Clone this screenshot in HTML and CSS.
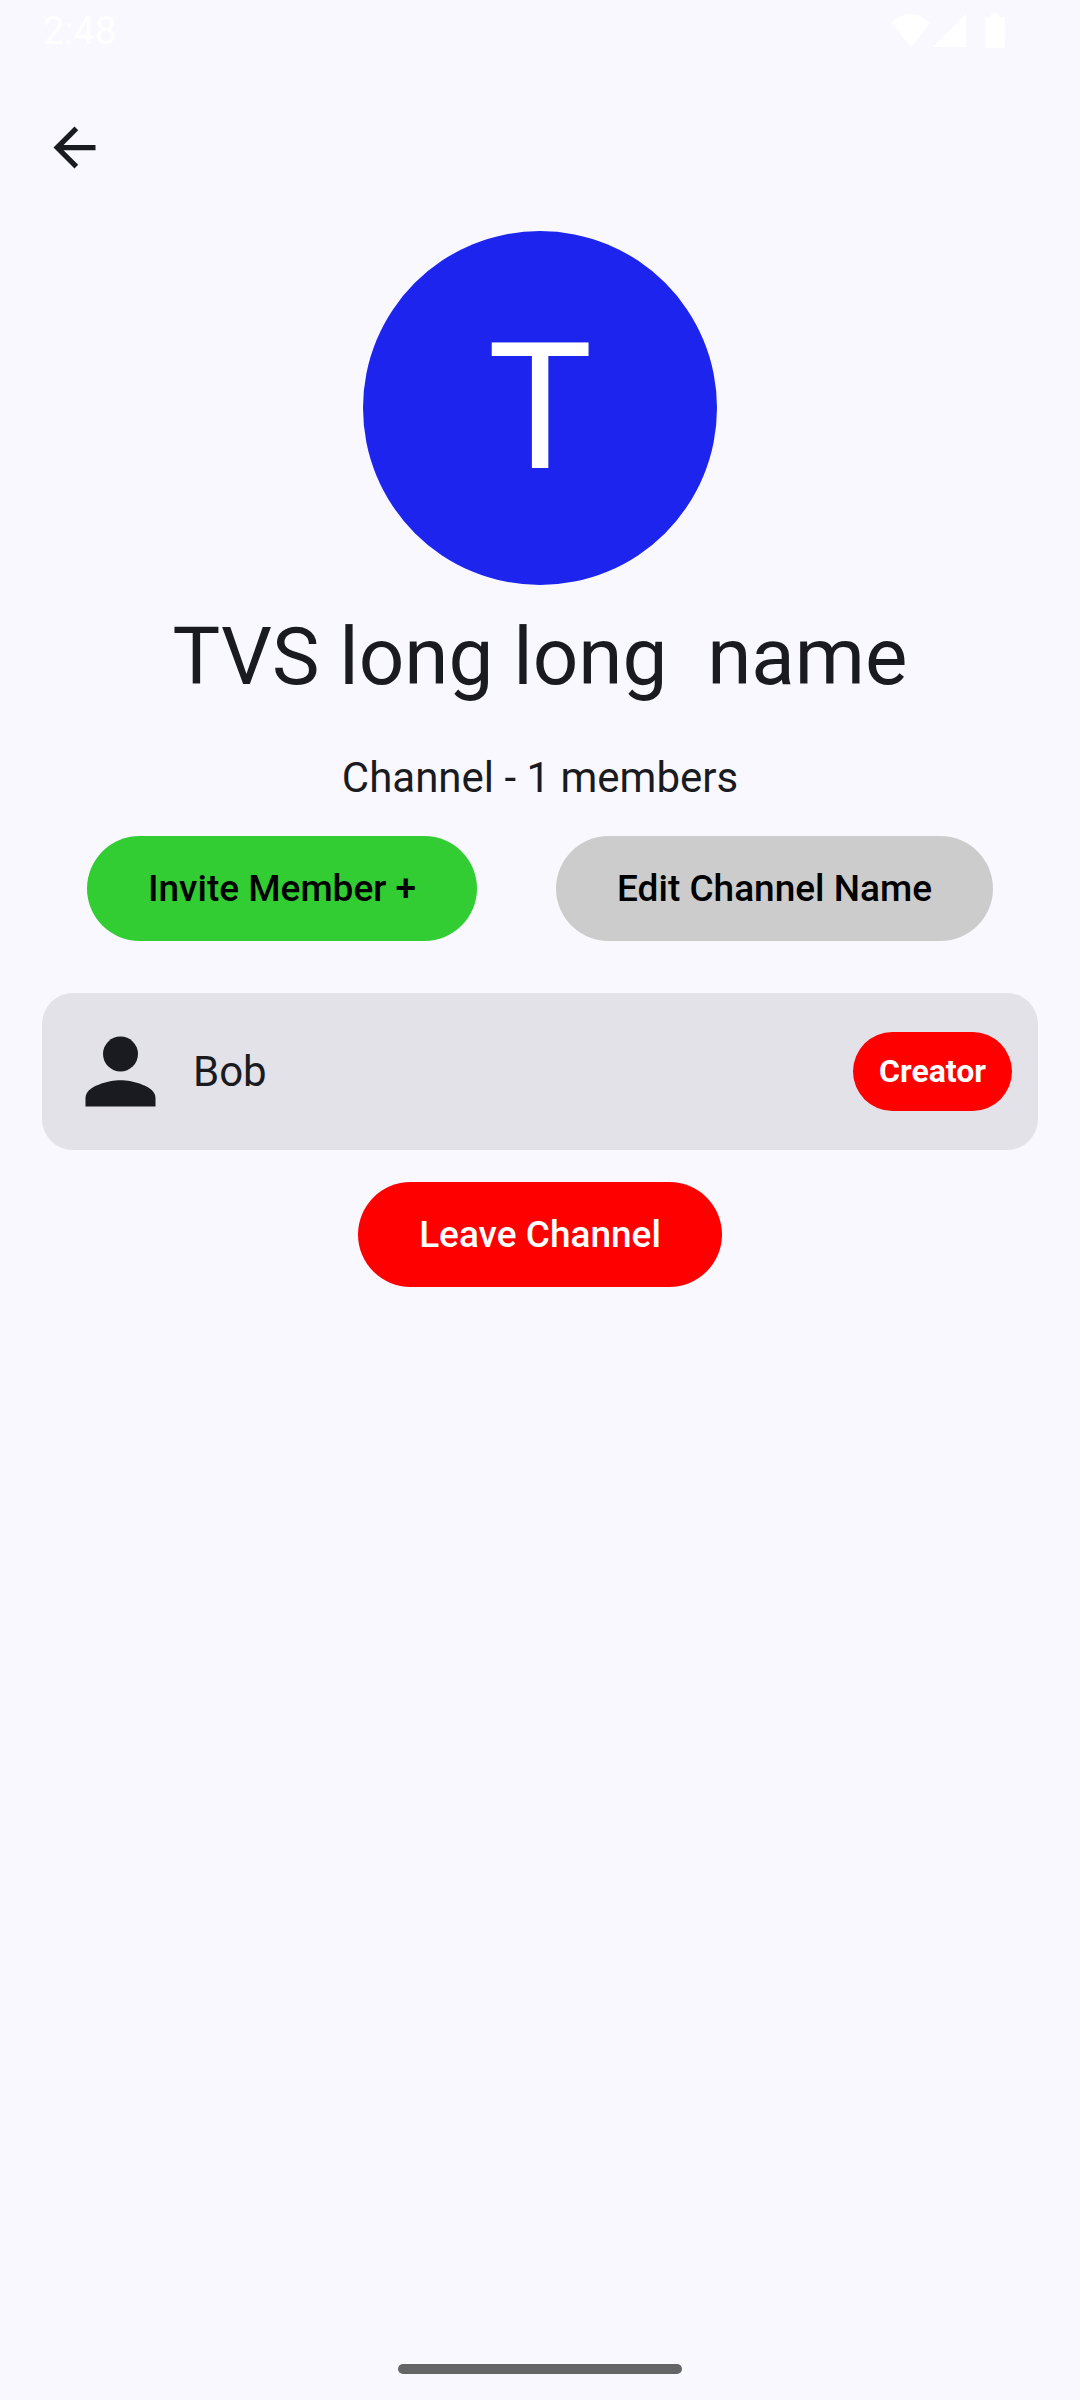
FILE: index.html
```html
<!DOCTYPE html>
<html lang="en">
<head>
<meta charset="utf-8">
<meta name="viewport" content="width=device-width, initial-scale=1">
<title>Channel info</title>
<link rel="stylesheet" href="styles.css">
</head>
<body>
<header class="status-bar">
  <span class="clock">2:48</span>
  <svg class="status-icons" width="116" height="36" viewBox="0 0 116 36" fill="#fff" aria-hidden="true">
    <path d="M0 9Q20-9 39 9L20 33Z"/>
    <path d="M75 0V33H42Z"/>
    <path d="M100 0h8v3h4a2 2 0 0 1 2 2v27a2 2 0 0 1-2 2H96a2 2 0 0 1-2-2V5a2 2 0 0 1 2-2h4z"/>
  </svg>
</header>
<nav class="top-bar">
  <button class="back" type="button" aria-label="Back">
    <svg width="63" height="63" viewBox="0 0 24 24" fill="currentColor" aria-hidden="true"><path d="M20 11H7.83l5.59-5.59L12 4l-8 8 8 8 1.410-1.410L7.830 13H20v-2z"/></svg>
  </button>
</nav>
<main class="content">
  <div class="avatar">T</div>
  <h1 class="title">TVS long long  name</h1>
  <p class="subtitle">Channel - 1 members</p>
  <div class="actions">
    <button class="button invite" type="button">Invite Member +</button>
    <button class="button edit" type="button">Edit Channel Name</button>
  </div>
  <ul class="members">
    <li class="member">
      <svg width="105" height="105" viewBox="0 0 24 24" fill="currentColor" aria-hidden="true"><circle cx="12" cy="8" r="4"/><path d="M12 14c-2.670 0-8 1.340-8 4v2h16v-2c0-2.660-5.330-4-8-4z"/></svg>
      <span class="member-name">Bob</span>
      <span class="badge">Creator</span>
    </li>
  </ul>
  <button class="button leave" type="button">Leave Channel</button>
</main>
<footer class="gesture-bar"><span class="handle"></span></footer>
</body>
</html>
```
FILE: styles.css
```css
* {
  box-sizing: border-box;
}

body {
  margin: 0;
  min-height: 100vh;
  display: flex;
  flex-direction: column;
  background: #f9f8ff;
  color: #1a1b20;
  font-family: Roboto, sans-serif;
}

button {
  border: 0;
  font-family: inherit;
  cursor: pointer;
}

.status-bar {
  display: flex;
  align-items: center;
  justify-content: space-between;
  height: 63px;
  padding: 0 73px 0 43px;
  color: #fff;
}

.clock {
  font-size: 38px;
  line-height: 63px;
}

.top-bar {
  display: flex;
  align-items: center;
  height: 168px;
  padding: 0 43px;
}

.back {
  display: flex;
  padding: 0;
  background: none;
  color: inherit;
}

.content {
  flex: 1;
  display: flex;
  flex-direction: column;
  align-items: center;
  padding: 0 42px;
}

.avatar {
  display: flex;
  align-items: center;
  justify-content: center;
  width: 354px;
  height: 354px;
  border-radius: 50%;
  background: #1d24ee;
  color: #fff;
  font-size: 176px;
}

.title {
  margin: 20px 0 36px;
  font-size: 80px;
  font-weight: 400;
  line-height: 105px;
  text-align: center;
  white-space: pre-wrap;
}

.subtitle {
  margin: 0 0 26px;
  font-size: 42px;
  line-height: 64px;
}

.actions {
  display: flex;
  flex-wrap: wrap;
  justify-content: center;
  gap: 79px;
}

.button {
  padding: 0 61px;
  border-radius: 53px;
  font-size: 37px;
  font-weight: 500;
  line-height: 105px;
}

.invite {
  background: #32cd32;
  color: #000;
}

.edit {
  background: #ccc;
  color: #000;
}

.leave {
  background: #f00;
  color: #fff;
}

.members {
  align-self: stretch;
  margin: 52px 0 32px;
  padding: 0;
  list-style: none;
}

.member {
  display: flex;
  align-items: center;
  padding: 26px;
  border-radius: 31px;
  background: #e3e2e8;
}

.member-name {
  flex: 1;
  padding-left: 20px;
  font-size: 42px;
  line-height: 64px;
}

.badge {
  padding: 0 26px;
  border-radius: 40px;
  background: #f00;
  color: #fff;
  font-size: 32px;
  font-weight: 700;
  line-height: 79px;
}

.gesture-bar {
  display: flex;
  justify-content: center;
  padding: 26px;
}

.handle {
  width: 284px;
  height: 10px;
  border-radius: 5px;
  background: #646567;
}
```
